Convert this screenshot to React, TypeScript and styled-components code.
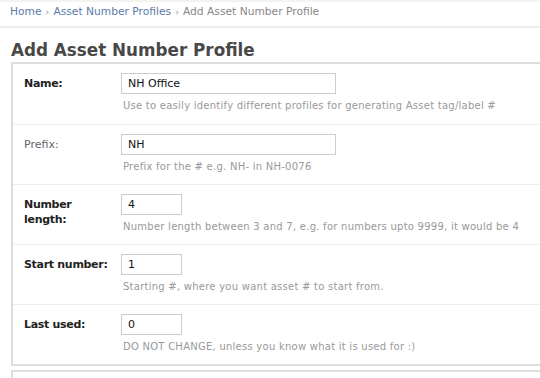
import styled, { createGlobalStyle } from 'styled-components';

const GlobalStyle = createGlobalStyle`
  html, body {
    margin: 0;
    padding: 0;
    background: #fff;
    overflow: hidden;
  }
  body {
    font-family: Tahoma, "DejaVu Sans", Verdana, sans-serif;
    color: #333;
  }
`;

const Page = styled.div`
  width: 600px;
`;

const Crumbs = styled.div`
  display: flex;
  align-items: flex-start;
  gap: 4px;
  height: 21px;
  padding: 3px 10px 0;
  border-top: 2px solid #f3f3f3;
  border-bottom: 2px solid #eee;
  font-family: "DejaVu Sans", Verdana, sans-serif;
  font-size: 10.7px;
  color: #888;
`;

const CrumbLink = styled.a`
  color: #5b7ba8;
  text-decoration: none;
`;

const Sep = styled.span`
  color: #999;
  font-size: 9.5px;
  padding-top: 1px;
`;

const Title = styled.h1`
  margin: 0;
  padding: 12px 0 0 11px;
  height: 22px;
  font-family: "DejaVu Sans", Verdana, sans-serif;
  font-size: 16.8px;
  font-weight: bold;
  color: #484848;
`;

const FormBox = styled.div`
  margin-left: 11px;
  border: 2px solid #ddd;
  border-right: none;
`;

const Row = styled.div`
  display: grid;
  grid-template-columns: 97px 1fr;
  height: 60px;
  border-top: 1px solid #eee;
  box-sizing: border-box;
  padding: 9px 0 0 11px;

  &:first-child {
    border-top: none;
  }
`;

const Label = styled.label<{ $plain?: boolean }>`
  padding: 3px 8px 0 0;
  font-family: "DejaVu Sans", Tahoma, sans-serif;
  font-size: 11px;
  line-height: 15px;
  font-weight: ${(p) => (p.$plain ? 'normal' : 'bold')};
  color: ${(p) => (p.$plain ? '#666' : '#222')};
  letter-spacing: ${(p) => (p.$plain ? '0' : '-0.3px')};
`;

const Field = styled.div`
  display: flex;
  flex-direction: column;
  gap: 6px;
`;

const Input = styled.input<{ $short?: boolean }>`
  box-sizing: border-box;
  width: ${(p) => (p.$short ? '61px' : '215px')};
  height: 21px;
  padding: 0 6px;
  border: 1px solid #ccc;
  font-family: "DejaVu Sans", Tahoma, sans-serif;
  font-size: 11px;
  color: #111;
  outline: none;
`;

const Hint = styled.div`
  font-family: "DejaVu Sans", Verdana, sans-serif;
  font-size: 10px;
  color: #999;
  letter-spacing: 0.25px;
  padding-left: 2px;
`;

const NextBox = styled.div`
  margin: 4px 0 0 11px;
  height: 20px;
  border: 2px solid #ddd;
  border-right: none;
  border-bottom: none;
`;

type FieldDef = {
  label: string;
  value: string;
  hint: string;
  short?: boolean;
  plain?: boolean;
};

const fields: FieldDef[] = [
  {
    label: 'Name:',
    value: 'NH Office',
    hint: 'Use to easily identify different profiles for generating Asset tag/label #',
  },
  { label: 'Prefix:', value: 'NH', hint: 'Prefix for the # e.g. NH- in NH-0076', plain: true },
  {
    label: 'Number length:',
    value: '4',
    hint: 'Number length between 3 and 7, e.g. for numbers upto 9999, it would be 4',
    short: true,
  },
  { label: 'Start number:', value: '1', hint: 'Starting #, where you want asset # to start from.', short: true },
  { label: 'Last used:', value: '0', hint: 'DO NOT CHANGE, unless you know what it is used for :)', short: true },
];

const App: React.FC = () => {
  return (
    <>
      <GlobalStyle />
      <Page>
        <Crumbs>
          <CrumbLink href='#'>Home</CrumbLink>
          <Sep>›</Sep>
          <CrumbLink href='#'>Asset Number Profiles</CrumbLink>
          <Sep>›</Sep>
          <span>Add Asset Number Profile</span>
        </Crumbs>
        <Title>Add Asset Number Profile</Title>
        <FormBox>
          {fields.map((f, i) => (
            <Row key={i}>
              <Label $plain={f.plain}>{f.label}</Label>
              <Field>
                <Input $short={f.short} defaultValue={f.value} />
                <Hint>{f.hint}</Hint>
              </Field>
            </Row>
          ))}
        </FormBox>
        <NextBox />
      </Page>
    </>
  );
};

export default App;
